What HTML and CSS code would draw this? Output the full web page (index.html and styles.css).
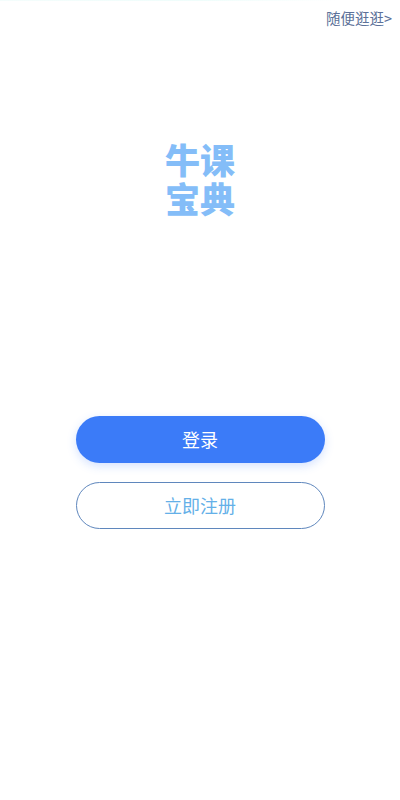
FILE: index.html
```html
<!DOCTYPE html>
<html lang="zh-CN">
<head>
<meta charset="utf-8">
<title>牛课宝典</title>
<link rel="stylesheet" href="styles.css">
</head>
<body>
<main class="page">
  <div class="topbar"><a class="browse">随便逛逛&gt;</a></div>
  <h1 class="logo">牛课<br>宝典</h1>
  <div class="actions">
    <button class="btn btn-primary">登录</button>
    <button class="btn btn-outline">立即注册</button>
  </div>
</main>
</body>
</html>
```
FILE: styles.css
```css
* { box-sizing: border-box; }
html, body { margin: 0; padding: 0; background: #fff; }
.page {
  width: 400px;
  height: 800px;
  display: flex;
  flex-direction: column;
  align-items: center;
  font-family: "Noto Sans CJK SC", "Noto Sans", sans-serif;
  background: linear-gradient(90deg, #f4fdfc 0, #effdfb 50%, #ffffff 85%) top / 100% 1px no-repeat #fff;
}
.topbar {
  width: 100%;
  display: flex;
  justify-content: flex-end;
  padding: 8px 8px 0 0;
}
.browse {
  font-size: 14.5px;
  line-height: 20px;
  color: #5c7199;
}
.logo {
  margin: 111px 0 0;
  font-size: 35px;
  line-height: 39px;
  font-weight: 900;
  color: #84bdf8;
  text-align: center;
}
.actions {
  margin-top: 199px;
  display: flex;
  flex-direction: column;
  gap: 19px;
}
.btn {
  width: 249px;
  height: 47px;
  border-radius: 24px;
  font-family: inherit;
  font-size: 18px;
  padding: 0 0 2px;
}
.btn-primary {
  border: 0;
  background: #3b7bf8;
  color: #fff;
  box-shadow: 0 3px 10px rgba(61, 125, 251, 0.22);
}
.btn-outline {
  border: 1px solid #5f87bd;
  background: #fff;
  color: #64b0e8;
}
```
